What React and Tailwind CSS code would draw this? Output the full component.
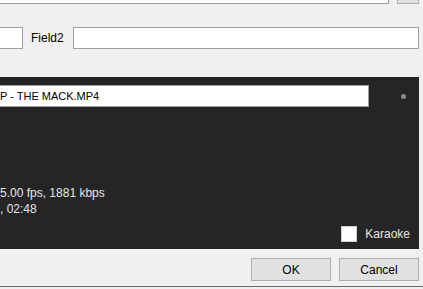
export default function App() {
  return (
    <div className="w-[423px] h-[289px] overflow-hidden bg-[#f0f0f0] flex flex-col text-[12px] text-black font-['Liberation_Sans',Arial,sans-serif]">
      {/* top row, mostly cut off */}
      <div className="flex h-[4px] shrink-0">
        <div className="w-[389px] h-[4px] bg-white border-r border-b border-[#a0a0a0]" />
        <div className="ml-[8px] w-[22px] h-[4px] bg-[#e1e1e1] border-x border-b border-[#adadad]" />
      </div>

      {/* fields */}
      <div className="flex items-center mt-[23px] h-[22px] shrink-0">
        <div className="w-[23px] h-[22px] bg-white border-y border-r border-[#a0a0a0]" />
        <span className="ml-[8px] leading-none">Field2</span>
        <div className="ml-[9px] w-[346px] h-[22px] bg-white border border-[#a0a0a0]" />
      </div>

      {/* dark preview panel */}
      <div className="mt-[28px] w-[419px] h-[172px] shrink-0 bg-[#252525] flex flex-col">
        <div className="flex items-center mt-[8px] h-[22px]">
          <div className="w-[369px] h-[22px] bg-white border-y border-r border-[#a0a0a0] flex items-center text-[11px] leading-none">
            P - THE MACK.MP4
          </div>
          <div className="ml-[32px] w-[5px] h-[5px] rounded-full bg-[#8a8a8a]" />
        </div>
        <div className="mt-[78px] text-[#e6e6e6] leading-[16px]">
          <div>5.00 fps, 1881 kbps</div>
          <div>, 02:48</div>
        </div>
        <div className="mt-[9px] flex items-center justify-end pr-[9px]">
          <div className="w-[16px] h-[16px] bg-white border border-[#d0d0d0]" />
          <span className="ml-[8px] text-[#e6e6e6] leading-none">Karaoke</span>
        </div>
      </div>

      {/* buttons */}
      <div className="flex mt-[9px] shrink-0">
        <button className="ml-[251px] w-[80px] h-[23px] bg-[#e1e1e1] border border-[#adadad] leading-none">OK</button>
        <button className="ml-[8px] w-[80px] h-[23px] bg-[#e1e1e1] border border-[#adadad] leading-none">Cancel</button>
      </div>
      <div className="mt-[5px] h-[1px] bg-[#6a6a6a] shrink-0" />
    </div>
  )
}
